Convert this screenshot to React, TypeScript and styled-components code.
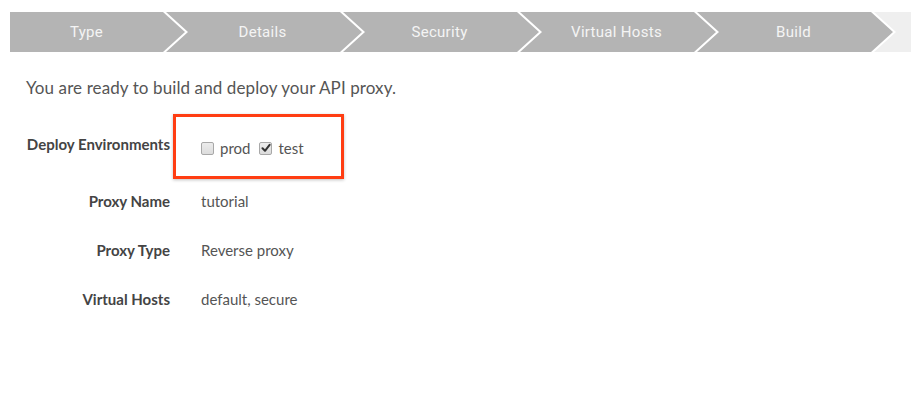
import React from "react";
import styled, { createGlobalStyle } from "styled-components";

const Global = createGlobalStyle`
  html, body { margin: 0; padding: 0; background: #fff; }
  body { font-family: Lato, "Open Sans", sans-serif; }
`;

const Page = styled.div`
  width: 911px;
  height: 401px;
  overflow: hidden;
  background: #fff;
`;

const Stepper = styled.div`
  display: flex;
  height: 40px;
  margin: 12px 0 0 10px;
  overflow: hidden;
`;

const D = 22;

const Step = styled.div<{ $first?: boolean; $w: number }>`
  flex: 0 0 ${(p) => p.$w}px;
  height: 40px;
  margin-left: ${(p) => (p.$first ? 0 : -19)}px;
  background: #b4b4b4;
  color: #f4f4f4;
  font-family: Roboto, "Liberation Sans", sans-serif;
  font-size: 15px;
  letter-spacing: 0.3px;
  display: flex;
  align-items: center;
  justify-content: center;
  box-sizing: border-box;
  padding-left: ${(p) => (p.$first ? 0 : D - 3)}px;
  padding-right: ${D}px;
  clip-path: ${(p) =>
    p.$first
      ? `polygon(0 0, calc(100% - ${D}px) 0, 100% 50%, calc(100% - ${D}px) 100%, 0 100%)`
      : `polygon(0 0, calc(100% - ${D}px) 0, 100% 50%, calc(100% - ${D}px) 100%, 0 100%, ${D}px 50%)`};
`;

const Tail = styled.div`
  flex: 1 1 auto;
  height: 40px;
  margin-left: -19px;
  background: #efefef;
  clip-path: polygon(0 0, 100% 0, 100% 100%, 0 100%, ${D}px 50%);
`;

const Content = styled.div`
  padding: 0 0 0 26px;
`;

const Intro = styled.p`
  margin: 26px 0 0 0;
  font-size: 17px;
  line-height: 20px;
  color: #555;
  letter-spacing: 0.1px;
`;

const Row = styled.div<{ $top: number }>`
  display: grid;
  grid-template-columns: 144px 1fr;
  column-gap: 3px;
  align-items: center;
  margin-top: ${(p) => p.$top}px;
`;

const Label = styled.div<{ $shift?: number }>`
  text-align: right;
  font-weight: 700;
  font-size: 15px;
  line-height: 20px;
  color: #444;
  padding-bottom: ${(p) => p.$shift ?? 0}px;
`;

const Value = styled.div`
  padding-left: 28px;
  font-size: 15px;
  line-height: 20px;
  color: #555;
`;

const Highlight = styled.div`
  justify-self: start;
  width: 171px;
  height: 65px;
  box-sizing: border-box;
  border: 3px solid #ff3d12;
  box-shadow: 0 1px 3px rgba(0, 0, 0, 0.25);
  padding: 3px 0 0 25px;
  display: flex;
  align-items: center;
  gap: 6px;
  font-size: 15px;
  color: #555;
`;

const Option = styled.label`
  display: flex;
  align-items: center;
  gap: 6px;
  margin-right: 3px;
`;

const Box = styled.span`
  width: 11px;
  height: 11px;
  border: 1px solid #a8a8a8;
  border-radius: 2px;
  background: linear-gradient(#ececec, #dcdcdc);
  display: inline-flex;
  align-items: center;
  justify-content: center;
`;

const Check = () => (
  <svg width="10" height="10" viewBox="0 0 10 10">
    <path d="M1.5 5.2 L4 7.8 L8.6 1.8" fill="none" stroke="#333" strokeWidth="2" strokeLinecap="round" strokeLinejoin="round" />
  </svg>
);

const steps = ["Type", "Details", "Security", "Virtual Hosts", "Build"];

export default function App() {
  return (
    <Page>
      <Global />
      <Stepper>
        {steps.map((s, i) => (
          <Step key={s} $first={i === 0} $w={i === 0 ? 175 : 196}>
            {s}
          </Step>
        ))}
        <Tail />
      </Stepper>
      <Content>
        <Intro>You are ready to build and deploy your API proxy.</Intro>
        <Row $top={16}>
          <Label $shift={5}>Deploy Environments</Label>
          <Highlight>
            <Option>
              <Box />
              prod
            </Option>
            <Option>
              <Box>
                <Check />
              </Box>
              test
            </Option>
          </Highlight>
        </Row>
        <Row $top={12}>
          <Label>Proxy Name</Label>
          <Value>tutorial</Value>
        </Row>
        <Row $top={29}>
          <Label>Proxy Type</Label>
          <Value>Reverse proxy</Value>
        </Row>
        <Row $top={29}>
          <Label>Virtual Hosts</Label>
          <Value>default, secure</Value>
        </Row>
      </Content>
    </Page>
  );
}
